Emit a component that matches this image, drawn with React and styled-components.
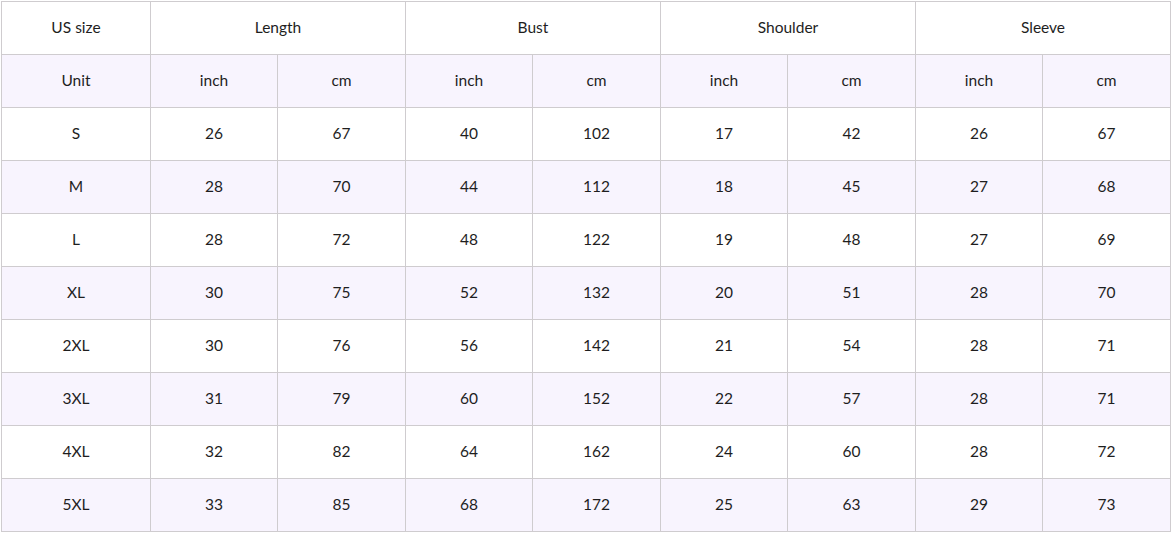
import React from 'react'
import styled, { createGlobalStyle } from 'styled-components'

const Global = createGlobalStyle`
  html, body { margin: 0; padding: 0; background: #fff; }
  body { font-family: Lato, "Open Sans", sans-serif; color: #222; }
`

const Wrap = styled.div`
  padding: 1px 0 0 1px;
`

const Table = styled.table`
  width: 1170px;
  border-collapse: collapse;
  table-layout: fixed;
  font-size: 15.5px;
`

const Row = styled.tr`
  background: ${p => (p.$tint ? '#f8f4fe' : '#fff')};
`

const Cell = styled.td`
  height: 50px;
  padding: 0 0 2px;
  border: 1px solid #cfcccf;
  text-align: center;
  vertical-align: middle;
  color: #1e1e1e;
`

const groups = ['Length', 'Bust', 'Shoulder', 'Sleeve']
const widths = [149, 127, 128, 127, 128, 127, 128, 127, 128]

const sizes = [
  ['S', 26, 67, 40, 102, 17, 42, 26, 67],
  ['M', 28, 70, 44, 112, 18, 45, 27, 68],
  ['L', 28, 72, 48, 122, 19, 48, 27, 69],
  ['XL', 30, 75, 52, 132, 20, 51, 28, 70],
  ['2XL', 30, 76, 56, 142, 21, 54, 28, 71],
  ['3XL', 31, 79, 60, 152, 22, 57, 28, 71],
  ['4XL', 32, 82, 64, 162, 24, 60, 28, 72],
  ['5XL', 33, 85, 68, 172, 25, 63, 29, 73],
]

export default function App() {
  return (
    <Wrap>
      <Global />
      <Table>
        <colgroup>
          {widths.map((w, i) => <col key={i} style={{ width: w }} />)}
        </colgroup>
        <tbody>
          <Row>
            <Cell>US size</Cell>
            {groups.map(g => <Cell key={g} colSpan={2}>{g}</Cell>)}
          </Row>
          <Row $tint>
            <Cell>Unit</Cell>
            {groups.map(g => (
              <React.Fragment key={g}>
                <Cell>inch</Cell>
                <Cell>cm</Cell>
              </React.Fragment>
            ))}
          </Row>
          {sizes.map((r, i) => (
            <Row key={r[0]} $tint={i % 2 === 1}>
              {r.map((v, j) => <Cell key={j}>{v}</Cell>)}
            </Row>
          ))}
        </tbody>
      </Table>
    </Wrap>
  )
}
